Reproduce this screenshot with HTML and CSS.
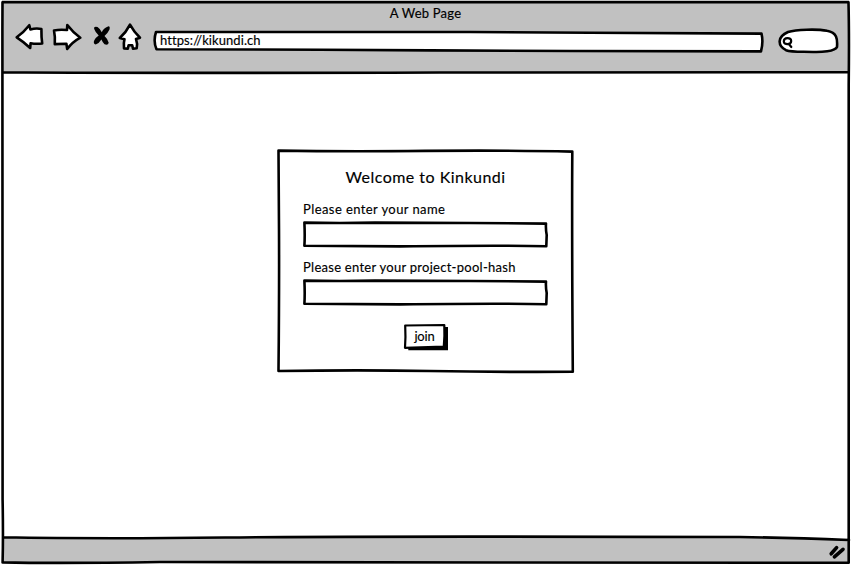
FILE: index.html
```html
<!DOCTYPE html>
<html lang="en">
<head>
<meta charset="utf-8">
<title>A Web Page</title>
<link rel="stylesheet" href="styles.css">
</head>
<body>
<div class="window">
  <header class="chrome">
    <div class="title"><span>A Web Page</span></div>
    <nav class="toolbar">
      <svg class="icon" width="32" height="30" viewBox="14 22 32 30"><path d="M16.7 37.3 Q24 32 29.3 25.2 L30.4 29.5 Q36 27.8 41.4 29 Q41.3 37 42.2 43.5 Q36 44.2 30.6 43.2 L30.2 48 Q24 42 16.7 37.3Z"/></svg>
      <svg class="icon forward" width="32" height="30" viewBox="51 22 32 30"><path d="M54 30.4 Q60 29.2 67 30 L67.3 25 Q73 32.5 80.3 37.7 Q72.5 42 67.2 49 L66.4 43.8 L54.8 44.1 Q55.3 36.5 54 30.4Z"/></svg>
      <svg class="icon stop" width="20" height="22" viewBox="92 25 20 22"><path class="solid" d="M94.2 29 Q93.5 26 97.5 27 Q100.5 29 101.8 32.2 Q103.5 28 108 26.4 Q110.4 26 109.5 29.5 Q107.8 33.3 104.5 36 Q107.8 39 108.7 42.7 Q108.2 45.5 104.5 44.3 Q102.4 42 101.4 39.5 Q99 43.5 95.7 44.5 Q92.8 43.5 94.3 40.2 Q96 37.3 98.7 35.5 Q95.3 32.3 94.2 29Z"/></svg>
      <svg class="icon home" width="26" height="30" viewBox="117 22 26 30"><path d="M130 24.6 Q134 32 140 37.7 L136 39 Q137.8 44 136.7 48.3 L133 48.8 L132.2 45.2 H128.6 L127.8 48.8 L124 48.4 Q123.4 43 124.5 39.2 L119.8 38 Q126.3 32 130 24.6Z"/></svg>
      <div class="address">
        <svg class="sketch" width="613" height="24" viewBox="152 30 613 24"><path class="fill" d="M156 32 L470 32 L590 32.8 L761.5 33.6 Q763.5 42 761 51.4 L570 51 L430 50.4 L320 49.7 L156.5 49.3 Q153 41 156 32Z"/></svg>
        <span>https://kikundi.ch</span>
      </div>
      <svg class="search" width="62" height="27" viewBox="778 28 62 27"><path d="M788 32 C796 29.5 817 28.8 827 30.8 C837 32.5 837.6 39 837 47 C835 51.5 821 52.3 813 52 C803 51.5 792 52.4 786 50.2 C777 45.5 777.5 36.5 788 32Z"/><path class="lens" d="M783.8 41.4 C783.8 37 791.2 37 791.2 41 C791.2 45 783.8 45.2 783.8 41.4Z M788.8 44 L791.3 47"/></svg>
    </nav>
  </header>
  <main class="page">
    <form class="card">
      <svg class="sketch" width="299" height="225" viewBox="276 149 299 225"><path d="M278.5 150.6 Q340 151.6 425 150.9 T572.3 151.6 Q571.8 230 572.8 371.8 Q500 372.2 430 371 T278.5 371 Q279.3 290 279 230 T278.5 150.6Z"/></svg>
      <h1>Welcome to Kinkundi</h1>
      <label class="name">Please enter your name</label>
      <div class="field"><svg class="sketch" width="247" height="27" viewBox="302 221 247 27"><path d="M304.4 222.6 Q340 223.3 375 222.6 L470 223 L546 223.6 Q545.6 229 546.7 235 L546.3 246.2 Q500 245.2 400 246.4 L304.4 245.7 Q305 236 304.4 222.6Z"/></svg></div>
      <label class="hash">Please enter your project-pool-hash</label>
      <div class="field"><svg class="sketch" width="247" height="27" viewBox="302 221 247 27"><path d="M304.4 222.6 Q340 223.3 375 222.6 L470 223 L546 223.6 Q545.6 229 546.7 235 L546.3 246.2 Q500 245.2 400 246.4 L304.4 245.7 Q305 236 304.4 222.6Z"/></svg></div>
      <div class="join"><svg class="sketch" width="46" height="28" viewBox="403 323 46 28"><path class="solid" d="M443 327 H448 V350.3 H408.3 V346Z"/><path class="edge" d="M405.2 325.5 L444.3 325 Q444.8 337 443.8 346.5 L405 347.8 Q405.8 337 405.2 325.5Z"/></svg><span>join</span></div>
    </form>
  </main>
  <footer class="status"><svg width="18" height="16" viewBox="828 544 18 16"><path class="slash" d="M831.2 553.8 L836.6 547.6 M834.4 556.8 L843 549.3"/></svg></footer>
  <svg class="outline" width="851" height="565" viewBox="0 0 851 565"><path class="footer-fill" d="M3 537.5 L130 538 L330 537.2 L750 537 L849 540 V562 H3Z"/><path d="M2.5 2.2 Q425 1.7 848.5 2.2 Q849.3 35 848.7 85 V562.8 Q700 563.2 500 562.5 T160 562 Q60 563.6 2.6 562.4 Q3.3 535 2.6 500 T2.4 30Z M2.5 72.2 Q150 73.3 440 72.5 T848 72.2 M3 537.3 Q100 539 225 537.5 T740 537 Q790 537.8 849 540"/></svg>
</div>
</body>
</html>
```
FILE: styles.css
```css
* { box-sizing: border-box; }
body { margin: 0; background: #fff; color: #000; font: 13px/18px Lato, "Open Sans", sans-serif; }
.window { position: relative; display: flex; flex-direction: column; width: 851px; height: 565px; overflow: hidden; }
.chrome { height: 73px; background: #c1c1c1; margin: 0 2px; padding-top: 4px; }
.title { text-align: center; letter-spacing: .22px; -webkit-text-stroke: .15px #000; }
.toolbar { display: flex; align-items: flex-start; padding-left: 12px; }
svg { display: block; flex: none; fill: #fff; stroke: #000; stroke-width: 2.6; stroke-linejoin: round; stroke-linecap: round; }
.forward { margin-left: 5px; }
.stop { margin: 3px 0 0 9px; }
.home { margin-left: 5px; }
.solid { fill: #000; stroke: none; }
.address { position: relative; width: 613px; height: 24px; margin: 8px 0 0 9px; padding: 1px 0 0 8px; letter-spacing: .08px; -webkit-text-stroke: .15px #000; }
.address span, .join span { position: relative; }
.sketch { position: absolute; left: 0; top: 0; }
.search { margin: 6px 0 0 13px; }
.lens { stroke-width: 2.2; }
.page { flex: 1; display: flex; justify-content: center; align-items: flex-start; padding-top: 76px; }
.card { position: relative; width: 299px; height: 225px; padding: 17px 26px 0; display: flex; flex-direction: column; -webkit-text-stroke: .15px #000; }
h1 { margin: 0; font-size: 16px; line-height: 22px; font-weight: 400; text-align: center; letter-spacing: .47px; position: relative; }
label { position: relative; height: 18px; padding-left: 1px; white-space: nowrap; letter-spacing: .42px; }
.name { margin-top: 12px; }
.hash { margin-top: 10px; letter-spacing: .27px; }
.field { position: relative; width: 247px; height: 27px; margin-top: 3px; }
.join { position: relative; width: 46px; height: 28px; margin: 17px 0 0 101px; padding: 4px 3px 0 0; text-align: center; letter-spacing: -.2px; }
.edge { stroke-width: 2.2; }
.status { height: 27px; padding: 6px 5px 0 0; display: flex; justify-content: flex-end; }
.status svg { position: relative; z-index: 1; }
.slash { stroke-width: 3.6; }
.outline { position: absolute; left: 0; top: 0; fill: none; pointer-events: none; }
.footer-fill { fill: #c1c1c1; stroke: none; }
```
